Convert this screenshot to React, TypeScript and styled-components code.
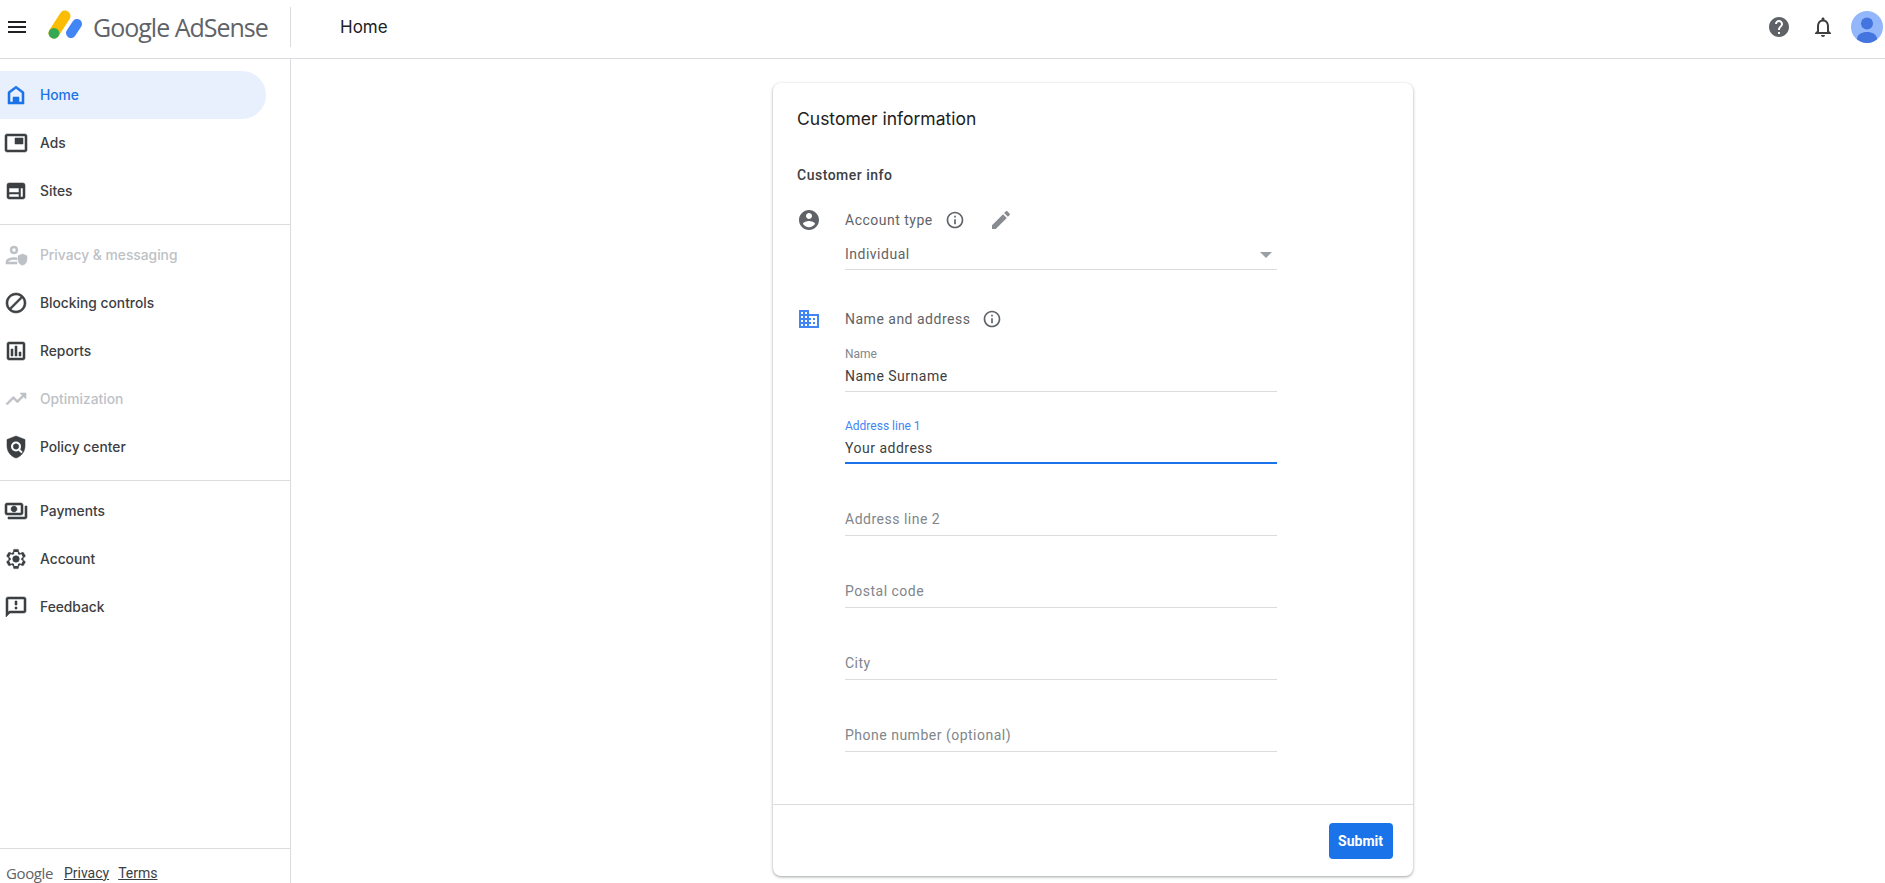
import React from 'react';
import styled, { createGlobalStyle } from 'styled-components';

const GlobalStyle = createGlobalStyle`
  html, body {
    margin: 0;
    height: 100%;
    overflow: hidden;
    background: #ffffff;
    font-family: Roboto, "Liberation Sans", sans-serif;
  }
`;

const Page = styled.div`
  display: flex;
  flex-direction: column;
  height: 883px;
`;

// Top bar
const TopBar = styled.header`
  display: flex;
  align-items: center;
  flex: 0 0 54px;
  border-bottom: 1px solid #dadce0;
  padding: 0 0 4px 5px;
`;

const Icon = styled.svg<{ $size?: number; $color?: string }>`
  display: block;
  flex: none;
  width: ${p => p.$size ?? 24}px;
  height: ${p => p.$size ?? 24}px;
  fill: ${p => p.$color ?? '#3c4043'};
`;

const NavIcon = styled(Icon)`
  stroke: ${p => p.$color ?? '#3c4043'};
  stroke-width: 0.55;
`;

const Brand = styled.div`
  display: flex;
  align-items: center;
  width: 285px;
`;

const LogoMark = styled.svg`
  display: block;
  width: 48px;
  height: 40px;
  margin-left: 9px;
`;

const Wordmark = styled.span`
  margin-left: 7px;
  font-family: "Open Sans", Roboto, sans-serif;
  font-size: 25px;
  letter-spacing: -1px;
  color: #5f6368;
  white-space: nowrap;
`;

const TopDivider = styled.div`
  width: 1px;
  height: 40px;
  background: #dadce0;
`;

const PageTitle = styled.div`
  margin-left: 49px;
  font-family: Inter, Roboto, sans-serif;
  font-size: 17px;
  color: #202124;
  flex: 1;
`;

const TopActions = styled.div`
  display: flex;
  align-items: center;
  margin-right: -4px;
`;

const ActionSlot = styled.div`
  display: flex;
  justify-content: center;
  width: 44px;
`;

const Avatar = styled.svg`
  display: block;
  width: 32px;
  height: 32px;
`;

// Body
const Body = styled.div`
  display: flex;
  flex: 1;
  min-height: 0;
`;

const Sidebar = styled.aside`
  display: flex;
  flex-direction: column;
  flex: 0 0 290px;
  border-right: 1px solid #dadce0;
  padding-top: 12px;
`;

const NavGroup = styled.nav`
  display: flex;
  flex-direction: column;
`;

const NavRow = styled.div<{ $active?: boolean; $disabled?: boolean }>`
  display: flex;
  align-items: center;
  gap: 12px;
  width: 266px;
  height: 48px;
  padding-left: 4px;
  box-sizing: border-box;
  border-radius: 0 24px 24px 0;
  font-family: Inter, Roboto, sans-serif;
  font-size: 13.8px;
  font-weight: 500;
  background: ${p => (p.$active ? '#e8f0fe' : 'transparent')};
  color: ${p => (p.$active ? '#1a73e8' : p.$disabled ? '#bdc1c6' : '#3c4043')};
`;

const NavLabel = styled.span`
  margin-bottom: 1px;
`;

const NavDivider = styled.hr`
  border: 0;
  height: 1px;
  background: #dadce0;
  margin: 9px 0 6px;
`;

const SideFooter = styled.footer`
  display: flex;
  align-items: center;
  margin-top: auto;
  height: 35px;
  box-sizing: border-box;
  border-top: 1px solid #dadce0;
  padding: 13px 0 0 6px;
  font-size: 14px;
  color: #3c4043;
`;

const FooterBrand = styled.span`
  font-family: "Open Sans", Roboto, sans-serif;
  color: #5f6368;
  font-size: 15px;
  letter-spacing: -0.4px;
  margin-right: 11px;
`;

const FooterLink = styled.a`
  color: #3c4043;
  text-decoration: underline;
  margin-right: 9px;
`;

const Content = styled.main`
  flex: 1;
  padding: 24px 0 0 481.5px;
`;

// Card
const Card = styled.section`
  display: flex;
  flex-direction: column;
  width: 640px;
  height: 793px;
  box-sizing: border-box;
  border-radius: 8px;
  background: #ffffff;
  box-shadow: 0 1px 2px rgba(60, 64, 67, 0.3), 0 1px 3px 1px rgba(60, 64, 67, 0.15);
`;

const CardBody = styled.div`
  flex: 1;
  padding: 22px 24px 0 24.5px;
`;

const CardTitle = styled.h1`
  margin: 0;
  font-family: Inter, Roboto, sans-serif;
  font-size: 17.5px;
  font-weight: 400;
  line-height: 28px;
  color: #202124;
`;

const SectionTitle = styled.h2`
  margin: 32px 0 0;
  font-size: 14px;
  font-weight: 500;
  line-height: 20px;
  letter-spacing: 0.5px;
  color: #3c4043;
`;

const GroupHead = styled.div<{ $top: number }>`
  display: flex;
  align-items: center;
  height: 24px;
  margin-top: ${p => p.$top}px;
`;

const GroupIcon = styled.div`
  flex: 0 0 48px;
`;

const GroupLabel = styled.span`
  font-size: 14px;
  letter-spacing: 0.5px;
  color: #5f6368;
`;

const InfoSlot = styled.div`
  margin-left: 12px;
`;

const EditSlot = styled.div`
  margin-left: 24px;
`;

const FieldColumn = styled.div`
  margin-left: 48px;
  width: 432px;
`;

const SelectBox = styled.div`
  display: flex;
  align-items: center;
  justify-content: space-between;
  margin-top: 12px;
  padding: 0 5px 5px 0;
  line-height: 20px;
  font-size: 14px;
  letter-spacing: 0.5px;
  color: #5f6368;
  border-bottom: 1px solid #dadce0;
`;

const Caret = styled.span`
  width: 0;
  height: 0;
  border-left: 6px solid transparent;
  border-right: 6px solid transparent;
  border-top: 6px solid #9aa0a6;
  margin-top: 2px;
`;

const Field = styled.div<{ $focused?: boolean; $top: number }>`
  margin-top: ${p => p.$top}px;
  padding-bottom: 5px;
  border-bottom: 1px solid ${p => (p.$focused ? '#1a73e8' : '#dadce0')};
  box-shadow: ${p => (p.$focused ? 'inset 0 -1px 0 #1a73e8' : 'none')};
`;

const FieldLabel = styled.label<{ $focused?: boolean }>`
  display: block;
  height: 14px;
  margin-bottom: 5px;
  font-size: 12px;
  line-height: 14px;
  color: ${p => (p.$focused ? '#4285f4' : '#80868b')};
`;

const FieldValue = styled.div<{ $placeholder?: boolean }>`
  margin: ${p => (p.$placeholder ? '-1px 0 1px' : '0')};
  font-size: 14px;
  line-height: 20px;
  letter-spacing: 0.5px;
  color: ${p => (p.$placeholder ? '#80868b' : '#3c4043')};
`;

const CardFooter = styled.div`
  display: flex;
  justify-content: flex-end;
  align-items: flex-start;
  flex: 0 0 72px;
  box-sizing: border-box;
  border-top: 1px solid #dadce0;
  padding: 18px 20px 0 0;
`;

const SubmitButton = styled.button`
  width: 64px;
  height: 36px;
  border: 0;
  border-radius: 4px;
  background: #1a73e8;
  color: #ffffff;
  font-family: Roboto, sans-serif;
  font-size: 14px;
  font-weight: 700;
  padding: 0;
`;

const GEAR =
  'M19.14 12.94c.04-.3.06-.61.06-.94 0-.32-.02-.64-.07-.94l2.03-1.58c.18-.14.23-.41.12-.61l-1.92-3.32c-.12-.22-.37-.29-.59-.22l-2.39.96c-.5-.38-1.03-.7-1.62-.94l-.36-2.54c-.04-.24-.24-.41-.48-.41h-3.84c-.24 0-.43.17-.47.41l-.36 2.54c-.59.24-1.13.57-1.62.94l-2.39-.96c-.22-.08-.47 0-.59.22L2.74 8.87c-.12.21-.08.47.12.61l2.03 1.58c-.05.3-.09.63-.09.94s.02.64.07.94l-2.03 1.58c-.18.14-.23.41-.12.61l1.92 3.32c.12.22.37.29.59.22l2.39-.96c.5.38 1.03.7 1.62.94l.36 2.54c.05.24.24.41.48.41h3.84c.24 0 .44-.17.47-.41l.36-2.54c.59-.24 1.13-.56 1.62-.94l2.39.96c.22.08.47 0 .59-.22l1.92-3.32c.12-.22.07-.47-.12-.61l-2.01-1.58z';

type NavItem = { label: string; icon: React.ReactNode; active?: boolean; disabled?: boolean };

const navGroups: NavItem[][] = [
  [
    {
      label: 'Home',
      active: true,
      icon: (
        <>
          <path d="M12 3L4 9v12h16V9l-8-6zm6 16h-3v-5H9v5H6v-9l6-4.5 6 4.5v9z" />
          <path d="M10 15h4v5h-4z" />
        </>
      ),
    },
    {
      label: 'Ads',
      icon: (
        <path d="M19 7h-8v6h8V7zm2-4H3c-1.1 0-2 .9-2 2v14c0 1.1.9 1.98 2 1.98h18c1.1 0 2-.88 2-1.98V5c0-1.1-.9-2-2-2zm0 16.01H3V4.98h18v14.03z" />
      ),
    },
    {
      label: 'Sites',
      icon: (
        <path d="M19 4H5c-1.1 0-2 .9-2 2v12c0 1.1.9 2 2 2h14c1.1 0 2-.9 2-2V6c0-1.1-.9-2-2-2zm-4 14H5v-3h10v3zm0-4.5H5V9h10v4.5zM19 18h-2.5V9H19v9z" />
      ),
    },
  ],
  [
    {
      label: 'Privacy & messaging',
      disabled: true,
      icon: (
        <>
          <path d="M10 3a4 4 0 100 8 4 4 0 000-8zm0 2a2 2 0 110 4 2 2 0 010-4z" />
          <path d="M2 21v-2.5c0-2.7 5-4 8-4 .9 0 1.9.1 3 .4v1.9c-1.1-.3-2.1-.4-3-.4-2.8 0-6 1.2-6 2.5V19h9v2H2z" />
          <path d="M18.5 11L14 12.8v3.7c0 2.7 1.9 5.1 4.5 5.7 2.6-.6 4.5-3 4.5-5.7v-3.7L18.5 11z" />
        </>
      ),
    },
    {
      label: 'Blocking controls',
      icon: (
        <path d="M12 2C6.48 2 2 6.48 2 12s4.48 10 10 10 10-4.48 10-10S17.52 2 12 2zM4 12c0-4.42 3.58-8 8-8 1.85 0 3.55.63 4.9 1.69L5.69 16.9C4.63 15.55 4 13.85 4 12zm8 8c-1.85 0-3.55-.63-4.9-1.69L18.31 7.1C19.37 8.45 20 10.15 20 12c0 4.42-3.58 8-8 8z" />
      ),
    },
    {
      label: 'Reports',
      icon: (
        <path d="M19 3H5c-1.1 0-2 .9-2 2v14c0 1.1.9 2 2 2h14c1.1 0 2-.9 2-2V5c0-1.1-.9-2-2-2zm0 16H5V5h14v14zM7 10h2v7H7zm4-3h2v10h-2zm4 6h2v4h-2z" />
      ),
    },
    {
      label: 'Optimization',
      disabled: true,
      icon: <path d="M16 6l2.29 2.29-4.88 4.88-4-4L2 16.59 3.41 18l6-6 4 4 6.3-6.29L22 12V6z" />,
    },
    {
      label: 'Policy center',
      icon: (
        <>
          <path d="M12 1L3 4.5V11c0 5.55 3.84 10.74 9 12 5.16-1.26 9-6.45 9-12V4.5L12 1z" />
          <circle cx="12" cy="11.5" r="5" fill="#fff" stroke="none" />
          <circle cx="12" cy="11.5" r="2.7" />
          <path d="M14.5 15.5l1.4-1.4 2.8 2.8-1.4 1.4z" fill="#fff" stroke="none" />
        </>
      ),
    },
  ],
  [
    {
      label: 'Payments',
      icon: (
        <path d="M19 14V6c0-1.1-.9-2-2-2H3c-1.1 0-2 .9-2 2v8c0 1.1.9 2 2 2h14c1.1 0 2-.9 2-2zm-2 0H3V6h14v8zm-7-7c-1.66 0-3 1.34-3 3s1.34 3 3 3 3-1.34 3-3-1.34-3-3-3zm13 0v11c0 1.1-.9 2-2 2H4v-2h17V7h2z" />
      ),
    },
    {
      label: 'Account',
      icon: (
        <>
          <path d={GEAR} />
          <path d={GEAR} fill="#fff" stroke="none" transform="translate(3.24 3.24) scale(.73)" />
          <circle cx="12" cy="12" r="3.3" />
        </>
      ),
    },
    {
      label: 'Feedback',
      icon: (
        <path d="M20 2H4c-1.1 0-1.99.9-1.99 2L2 22l4-4h14c1.1 0 2-.9 2-2V4c0-1.1-.9-2-2-2zm0 14H5.17L4 17.17V4h16v12zm-9-4h2v2h-2zm0-6h2v4h-2z" />
      ),
    },
  ],
];

const InfoIcon = () => (
  <Icon $size={20} $color="#5f6368" viewBox="0 0 24 24">
    <path d="M11 7h2v2h-2zm0 4h2v6h-2zm1-9C6.48 2 2 6.48 2 12s4.48 10 10 10 10-4.48 10-10S17.52 2 12 2zm0 18c-4.41 0-8-3.59-8-8s3.59-8 8-8 8 3.59 8 8-3.59 8-8 8z" />
  </Icon>
);

const App: React.FC = (): JSX.Element => {
  return (
    <Page>
      <GlobalStyle />
      <TopBar>
        <Brand>
          <Icon $color="#202124" viewBox="0 0 24 24">
            <path d="M3 18h18v-2H3v2zm0-5h18v-2H3v2zm0-7v2h18V6H3z" />
          </Icon>
          <LogoMark viewBox="0 0 48 40">
            <path d="M16 26L27 9" stroke="#fbbc04" strokeWidth="11" strokeLinecap="round" fill="none" />
            <circle cx="16" cy="26.3" r="5.4" fill="#34a853" />
            <path d="M33 26L39 17" stroke="#4285f4" strokeWidth="10" strokeLinecap="round" fill="none" />
          </LogoMark>
          <Wordmark>Google AdSense</Wordmark>
        </Brand>
        <TopDivider />
        <PageTitle>Home</PageTitle>
        <TopActions>
          <ActionSlot>
            <Icon $color="#5f6368" viewBox="0 0 24 24">
              <path d="M12 2C6.48 2 2 6.48 2 12s4.48 10 10 10 10-4.48 10-10S17.52 2 12 2zm1 17h-2v-2h2v2zm2.07-7.75l-.9.92C13.45 12.9 13 13.5 13 15h-2v-.5c0-1.1.45-2.1 1.17-2.83l1.24-1.26c.37-.36.59-.86.59-1.41 0-1.1-.9-2-2-2s-2 .9-2 2H8c0-2.21 1.79-4 4-4s4 1.79 4 4c0 .88-.36 1.68-.93 2.25z" />
            </Icon>
          </ActionSlot>
          <ActionSlot>
            <Icon viewBox="0 0 24 24">
              <path d="M12 22c1.1 0 2-.9 2-2h-4c0 1.1.9 2 2 2zm6-6v-5c0-3.07-1.63-5.64-4.5-6.32V4c0-.83-.67-1.5-1.5-1.5s-1.5.67-1.5 1.5v.68C7.64 5.36 6 7.92 6 11v5l-2 2v1h16v-1l-2-2zm-2 1H8v-6c0-2.48 1.51-4.5 4-4.5s4 2.02 4 4.5v6z" />
            </Icon>
          </ActionSlot>
          <ActionSlot>
            <Avatar viewBox="0 0 32 32">
              <defs>
                <clipPath id="avatar-clip">
                  <circle cx="16" cy="16" r="16" />
                </clipPath>
              </defs>
              <g clipPath="url(#avatar-clip)">
                <rect width="32" height="32" fill="#93b7fa" />
                <circle cx="16" cy="12.5" r="6" fill="#4374e0" />
                <path d="M6 32v-4c0-4.5 5-7 10-7s10 2.5 10 7v4z" fill="#4374e0" />
              </g>
            </Avatar>
          </ActionSlot>
        </TopActions>
      </TopBar>
      <Body>
        <Sidebar>
          {navGroups.map((group, groupIndex) => (
            <React.Fragment key={groupIndex}>
              {groupIndex > 0 && <NavDivider />}
              <NavGroup>
                {group.map(item => (
                  <NavRow key={item.label} $active={item.active} $disabled={item.disabled}>
                    <NavIcon
                      viewBox="0 0 24 24"
                      $color={item.active ? '#1a73e8' : item.disabled ? '#bdc1c6' : '#3c4043'}
                    >
                      {item.icon}
                    </NavIcon>
                    <NavLabel>{item.label}</NavLabel>
                  </NavRow>
                ))}
              </NavGroup>
            </React.Fragment>
          ))}
          <SideFooter>
            <FooterBrand>Google</FooterBrand>
            <FooterLink href="#">Privacy</FooterLink>
            <FooterLink href="#">Terms</FooterLink>
          </SideFooter>
        </Sidebar>
        <Content>
          <Card>
            <CardBody>
              <CardTitle>Customer information</CardTitle>
              <SectionTitle>Customer info</SectionTitle>
              <GroupHead $top={23}>
                <GroupIcon>
                  <Icon $color="#5f6368" viewBox="0 0 24 24">
                    <path d="M12 2C6.48 2 2 6.48 2 12s4.48 10 10 10 10-4.48 10-10S17.52 2 12 2zm0 3c1.66 0 3 1.34 3 3s-1.34 3-3 3-3-1.34-3-3 1.34-3 3-3zm0 14.2c-2.5 0-4.71-1.28-6-3.22.03-1.99 4-3.08 6-3.08 1.99 0 5.97 1.09 6 3.08-1.29 1.94-3.5 3.22-6 3.22z" />
                  </Icon>
                </GroupIcon>
                <GroupLabel>Account type</GroupLabel>
                <InfoSlot>
                  <InfoIcon />
                </InfoSlot>
                <EditSlot>
                  <Icon $color="#888b8f" viewBox="0 0 24 24">
                    <path d="M3 17.25V21h3.75L17.81 9.94l-3.75-3.75L3 17.25zM20.71 7.04c.39-.39.39-1.02 0-1.41l-2.34-2.34c-.39-.39-1.02-.39-1.41 0l-1.83 1.83 3.75 3.75 1.83-1.83z" />
                  </Icon>
                </EditSlot>
              </GroupHead>
              <FieldColumn>
                <SelectBox>
                  Individual
                  <Caret />
                </SelectBox>
              </FieldColumn>
              <GroupHead $top={37}>
                <GroupIcon>
                  <Icon $color="#4285f4" viewBox="0 0 24 24">
                    <path d="M12 7V3H2v18h20V7H12zM6 19H4v-2h2v2zm0-4H4v-2h2v2zm0-4H4V9h2v2zm0-4H4V5h2v2zm4 12H8v-2h2v2zm0-4H8v-2h2v2zm0-4H8V9h2v2zm0-4H8V5h2v2zm10 12h-8v-2h2v-2h-2v-2h2v-2h-2V9h8v10zm-2-8h-2v2h2v-2zm0 4h-2v2h2v-2z" />
                  </Icon>
                </GroupIcon>
                <GroupLabel>Name and address</GroupLabel>
                <InfoSlot>
                  <InfoIcon />
                </InfoSlot>
              </GroupHead>
              <FieldColumn>
                <Field $top={16}>
                  <FieldLabel>Name</FieldLabel>
                  <FieldValue>Name Surname</FieldValue>
                </Field>
                <Field $top={27} $focused>
                  <FieldLabel $focused>Address line 1</FieldLabel>
                  <FieldValue>Your address</FieldValue>
                </Field>
                <Field $top={27}>
                  <FieldLabel />
                  <FieldValue $placeholder>Address line 2</FieldValue>
                </Field>
                <Field $top={27}>
                  <FieldLabel />
                  <FieldValue $placeholder>Postal code</FieldValue>
                </Field>
                <Field $top={27}>
                  <FieldLabel />
                  <FieldValue $placeholder>City</FieldValue>
                </Field>
                <Field $top={27}>
                  <FieldLabel />
                  <FieldValue $placeholder>Phone number (optional)</FieldValue>
                </Field>
              </FieldColumn>
            </CardBody>
            <CardFooter>
              <SubmitButton>Submit</SubmitButton>
            </CardFooter>
          </Card>
        </Content>
      </Body>
    </Page>
  );
};

export default App;
